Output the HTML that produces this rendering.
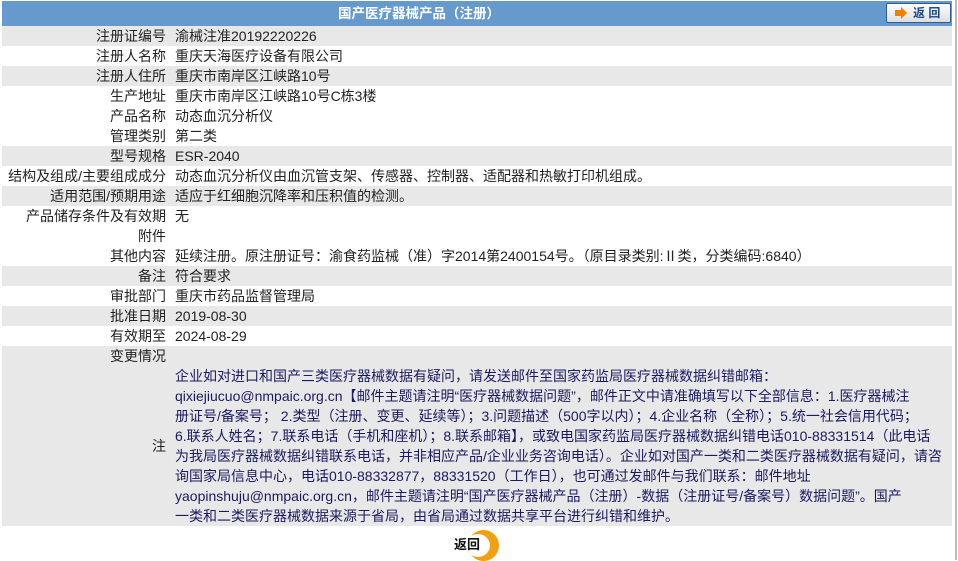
<!DOCTYPE html>
<html><head><meta charset="utf-8"><style>
body{margin:0;background:#fff;width:958px;height:560px;overflow:hidden;position:relative;font-family:"Liberation Sans","Noto Sans CJK SC",sans-serif;font-size:14px;color:#222;}
.hdr{position:absolute;left:2px;top:1px;width:950px;height:25px;background:#6699cc;color:#fff;font-weight:bold;line-height:25px;font-size:13.5px;}
.hdr span{position:absolute;left:336px;top:0;}
.btn{position:absolute;left:886px;top:3px;width:63px;height:18px;border:1px solid #2a5aa0;border-radius:2px;background:linear-gradient(#fff,#ddd);}
.btn .ar{position:absolute;left:8px;top:6px;width:6px;height:6px;background:#f08000;}
.btn .ar:after{content:"";position:absolute;left:6px;top:-3px;border-left:6px solid #f08000;border-top:6px solid transparent;border-bottom:6px solid transparent;}
.btn span{position:absolute;left:26px;top:0;line-height:18px;color:#1a4a8a;font-weight:bold;font-size:12px;}
.r{position:absolute;left:2px;width:950px;height:20px;line-height:20px;}
.g{background:#e8e8e8;}
.l{position:absolute;left:0;width:164px;text-align:right;white-space:nowrap;}
.v{position:absolute;left:173px;white-space:nowrap;}
.note{position:absolute;left:175px;top:366px;line-height:20px;color:#1a1a60;white-space:nowrap;}
.sb{position:absolute;left:955px;top:0;width:2px;height:560px;background:#bbb;}
</style></head><body>
<div class="hdr"><span>国产医疗器械产品（注册）</span></div>
<div class="btn"><div class="ar"></div><span>返 回</span></div>
<div class="r g" style="top:26px"><div class="l">注册证编号</div><div class="v">渝械注准20192220226</div></div>
<div class="r" style="top:46px"><div class="l">注册人名称</div><div class="v">重庆天海医疗设备有限公司</div></div>
<div class="r g" style="top:66px"><div class="l">注册人住所</div><div class="v">重庆市南岸区江峡路10号</div></div>
<div class="r" style="top:86px"><div class="l">生产地址</div><div class="v">重庆市南岸区江峡路10号C栋3楼</div></div>
<div class="r" style="top:106px"><div class="l">产品名称</div><div class="v">动态血沉分析仪</div></div>
<div class="r" style="top:126px"><div class="l">管理类别</div><div class="v">第二类</div></div>
<div class="r g" style="top:146px"><div class="l">型号规格</div><div class="v">ESR-2040</div></div>
<div class="r" style="top:166px"><div class="l">结构及组成/主要组成成分</div><div class="v">动态血沉分析仪由血沉管支架、传感器、控制器、适配器和热敏打印机组成。</div></div>
<div class="r g" style="top:186px"><div class="l">适用范围/预期用途</div><div class="v">适应于红细胞沉降率和压积值的检测。</div></div>
<div class="r" style="top:206px;height:40px"><div class="l">产品储存条件及有效期<br>附件</div><div class="v">无</div></div>
<div class="r" style="top:246px"><div class="l">其他内容</div><div class="v">延续注册。原注册证号：渝食药监械（准）字2014第2400154号。（原目录类别:Ⅱ类，分类编码:6840）</div></div>
<div class="r g" style="top:266px"><div class="l">备注</div><div class="v">符合要求</div></div>
<div class="r" style="top:286px"><div class="l">审批部门</div><div class="v">重庆市药品监督管理局</div></div>
<div class="r g" style="top:306px"><div class="l">批准日期</div><div class="v">2019-08-30</div></div>
<div class="r" style="top:326px"><div class="l">有效期至</div><div class="v">2024-08-29</div></div>
<div class="r g" style="top:346px;height:180px"><div class="l">变更情况</div><div class="l" style="top:90px">注</div></div>
<div class="note">企业如对进口和国产三类医疗器械数据有疑问，请发送邮件至国家药监局医疗器械数据纠错邮箱：<br>qixiejiucuo@nmpaic.org.cn【邮件主题请注明“医疗器械数据问题”，邮件正文中请准确填写以下全部信息：1.医疗器械注<br>册证号/备案号； 2.类型（注册、变更、延续等）；3.问题描述（500字以内）；4.企业名称（全称）；5.统一社会信用代码；<br>6.联系人姓名；7.联系电话（手机和座机）；8.联系邮箱】，或致电国家药监局医疗器械数据纠错电话010-88331514（此电话<br>为我局医疗器械数据纠错联系电话，并非相应产品/企业业务咨询电话）。企业如对国产一类和二类医疗器械数据有疑问，请咨<br>询国家局信息中心，电话010-88332877，88331520（工作日），也可通过发邮件与我们联系：邮件地址<br>yaopinshuju@nmpaic.org.cn，邮件主题请注明“国产医疗器械产品（注册）-数据（注册证号/备案号）数据问题”。国产<br>一类和二类医疗器械数据来源于省局，由省局通过数据共享平台进行纠错和维护。</div>
<div style="position:absolute;left:468px;top:530px;width:31px;height:31px;border-radius:50%;background:#f0a010;"></div>
<div style="position:absolute;left:466px;top:534px;width:24px;height:23px;border-radius:50%;background:#fff;"></div>
<div style="position:absolute;left:454px;top:536px;font-weight:bold;font-size:13px;color:#111;line-height:18px;">返回</div>
<div class="sb"></div>
</body></html>
